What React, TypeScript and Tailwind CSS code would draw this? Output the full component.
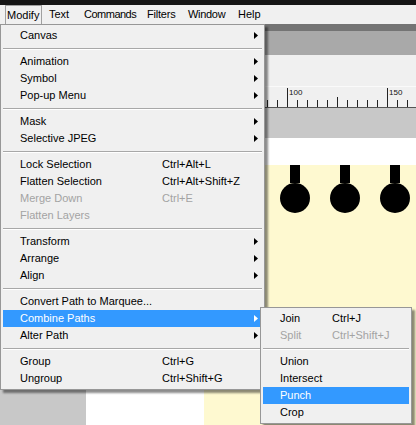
import clsx from 'clsx';

type Item =
  | { sep: true }
  | { sep?: false; label: string; shortcut?: string; arrow?: boolean; disabled?: boolean; active?: boolean };

const modifyItems: Item[] = [
  { label: 'Canvas', arrow: true },
  { sep: true },
  { label: 'Animation', arrow: true },
  { label: 'Symbol', arrow: true },
  { label: 'Pop-up Menu', arrow: true },
  { sep: true },
  { label: 'Mask', arrow: true },
  { label: 'Selective JPEG', arrow: true },
  { sep: true },
  { label: 'Lock Selection', shortcut: 'Ctrl+Alt+L' },
  { label: 'Flatten Selection', shortcut: 'Ctrl+Alt+Shift+Z' },
  { label: 'Merge Down', shortcut: 'Ctrl+E', disabled: true },
  { label: 'Flatten Layers', disabled: true },
  { sep: true },
  { label: 'Transform', arrow: true },
  { label: 'Arrange', arrow: true },
  { label: 'Align', arrow: true },
  { sep: true },
  { label: 'Convert Path to Marquee...' },
  { label: 'Combine Paths', arrow: true, active: true },
  { label: 'Alter Path', arrow: true },
  { sep: true },
  { label: 'Group', shortcut: 'Ctrl+G' },
  { label: 'Ungroup', shortcut: 'Ctrl+Shift+G' },
];

const combineItems: Item[] = [
  { label: 'Join', shortcut: 'Ctrl+J' },
  { label: 'Split', shortcut: 'Ctrl+Shift+J', disabled: true },
  { sep: true },
  { label: 'Union' },
  { label: 'Intersect' },
  { label: 'Punch', active: true },
  { label: 'Crop' },
];

function Arrow({ white }: { white?: boolean }) {
  return (
    <svg width="4" height="7" viewBox="0 0 4 7" className="block">
      <path d="M0 0 L4 3.5 L0 7 Z" fill={white ? '#ffffff' : '#000000'} />
    </svg>
  );
}

function MenuList({ items, labelWidth }: { items: Item[]; labelWidth: string }) {
  return (
    <div className="border border-[#979797] bg-[#f0f0f0] p-[2px] shadow-[3px_3px_2px_rgba(0,0,0,0.45)]">
      {items.map((item, i) =>
        item.sep ? (
          <div key={i} className="flex h-[9px] flex-col justify-center">
            <div className="h-px bg-[#a8a8a8]" />
            <div className="h-px bg-white" />
          </div>
        ) : (
          <div
            key={i}
            className={clsx(
              'flex h-[17px] items-center whitespace-nowrap leading-none',
              item.active ? 'bg-[#3399ff] text-white' : item.disabled ? 'text-[#a3a3a3]' : 'text-black'
            )}
          >
            <span className={clsx('shrink-0 pl-[17px]', labelWidth)}>{item.label}</span>
            <span className="flex-1">{item.shortcut}</span>
            {item.arrow && (
              <span className="pr-[4px]">
                <Arrow white={item.active} />
              </span>
            )}
          </div>
        )
      )}
    </div>
  );
}

function MenuBar() {
  return (
    <div className="flex h-[19px] items-stretch whitespace-nowrap bg-[#f0f0f0] leading-none">
      <div className="ml-[5px] flex w-[37px] items-center border border-b-0 border-[#a0a0a0] pl-[1px]">Modify</div>
      <div className="flex w-[36px] items-center pl-[7px]">Text</div>
      <div className="flex w-[63px] items-center pl-[6px] tracking-[-0.5px]">Commands</div>
      <div className="flex w-[41px] items-center pl-[6px] tracking-[-0.2px]">Filters</div>
      <div className="flex w-[50px] items-center pl-[6px] tracking-[-0.3px]">Window</div>
      <div className="flex items-center pl-[6px]">Help</div>
    </div>
  );
}

function Ruler() {
  const ticks = Array.from({ length: 15 }, (_, i) => 267 + i * 10);
  return (
    <div className="h-[22px] bg-[#f0f0f0]">
      <svg width="416" height="22" className="block">
        <rect x="0" y="0" width="416" height="1" fill="#fafafa" />
        {ticks.map((x) => {
          const long = x === 287 || x === 387;
          const mid = x === 337;
          const top = long ? 2 : mid ? 11 : 14;
          return <rect key={x} x={x} y={top} width="1" height={21 - top} fill="#222" />;
        })}
        <rect x="0" y="21" width="416" height="1" fill="#555" />
        <text x="289" y="9" fontSize="8" fontFamily="Liberation Sans, Arial, sans-serif" fill="#111">
          100
        </text>
        <text x="389" y="9" fontSize="8" fontFamily="Liberation Sans, Arial, sans-serif" fill="#111">
          150
        </text>
      </svg>
    </div>
  );
}

export default function App() {
  return (
    <div className="relative flex h-[425px] w-[416px] flex-col overflow-hidden bg-[#c8c8c8] font-['Liberation_Sans',Arial,sans-serif] text-[11px] text-black">
      <div className="h-[5px] shrink-0 bg-[#151515]" />
      <MenuBar />
      <div className="h-[7px] shrink-0 bg-[#747474]" />
      <div className="h-[24px] shrink-0 bg-[#a9a9a9]" />
      <div className="h-[31px] shrink-0 bg-[#f0f0f0]" />
      <Ruler />
      <div className="h-[30px] shrink-0 bg-[#c8c8c8]" />
      <div className="flex h-[27px] shrink-0">
        <div className="w-[86px] bg-[#c8c8c8]" />
        <div className="flex-1 bg-white" />
      </div>
      <div className="flex flex-1">
        <div className="w-[86px] bg-[#c8c8c8]" />
        <div className="w-[118px] bg-white" />
        <div className="flex flex-1 gap-[20px] bg-[#fef9d0] pl-[76px]">
          {[0, 1, 2].map((i) => (
            <div key={i} className="flex w-[30px] flex-col items-center">
              <div className="h-[18px] w-[10px] bg-black" />
              <div className="h-[30px] w-[30px] rounded-full bg-black" />
            </div>
          ))}
        </div>
      </div>

      <div className="absolute left-0 top-[24px] w-[265px]">
        <MenuList items={modifyItems} labelWidth="w-[159px]" />
      </div>
      <div className="absolute left-[260px] top-[307px] w-[152px]">
        <MenuList items={combineItems} labelWidth="w-[69px]" />
      </div>
    </div>
  );
}
